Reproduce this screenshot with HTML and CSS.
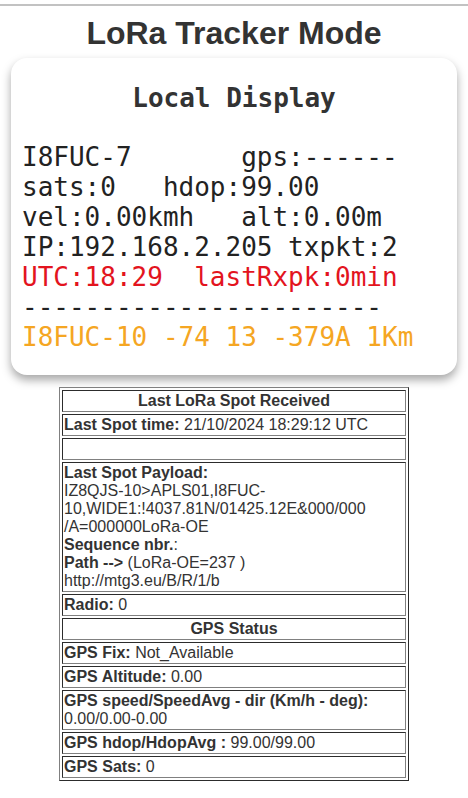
FILE: index.html
```html
<!DOCTYPE html>
<html>
<head>
<meta charset="utf-8">
<title>LoRa Tracker Mode</title>
<link rel="stylesheet" href="styles.css">
</head>
<body>
    <!-- 顶部分隔线 -->
    <div class="topline"></div>
    <h1 class="page-title">LoRa Tracker Mode</h1>

    <!-- 本地显示屏 -->
    <div class="display-card">
        <h2 class="display-title">Local Display</h2>
        <div class="display-lines">
            <div class="line">I8FUC-7       gps:------</div>
            <div class="line">sats:0   hdop:99.00</div>
            <div class="line">vel:0.00kmh   alt:0.00m</div>
            <div class="line">IP:192.168.2.205 txpkt:2</div>
            <div class="line red">UTC:18:29  lastRxpk:0min</div>
            <div class="line">-----------------------</div>
            <div class="line orange">I8FUC-10 -74 13 -379A 1Km</div>
        </div>
    </div>

    <!-- 状态表格 -->
    <table class="status-table">
        <tr><td class="head">Last LoRa Spot Received</td></tr>
        <tr><td><b>Last Spot time:</b> 21/10/2024 18:29:12 UTC</td></tr>
        <tr><td>&nbsp;</td></tr>
        <tr><td><b>Last Spot Payload:</b><br>IZ8QJS-10&gt;APLS01,I8FUC-10,WIDE1:!4037.81N/01425.12E&amp;000/000<wbr>/A=000000LoRa-OE<br><b>Sequence nbr.</b>:<br><b>Path --&gt;</b> (LoRa-OE=237 )<br>http://mtg3.eu/B/R/1/b</td></tr>
        <tr><td><b>Radio:</b> 0</td></tr>
        <tr><td class="head">GPS Status</td></tr>
        <tr><td><b>GPS Fix:</b> Not_Available</td></tr>
        <tr><td><b>GPS Altitude:</b> 0.00</td></tr>
        <tr><td><b>GPS speed/SpeedAvg - dir (Km/h - deg):</b><br>0.00/0.00-0.00</td></tr>
        <tr><td><b>GPS hdop/HdopAvg :</b> 99.00/99.00</td></tr>
        <tr><td><b>GPS Sats:</b> 0</td></tr>
    </table>
</body>
</html>
```
FILE: styles.css
```css
* {
    margin: 0; /* 清除默认边距 */
    padding: 0;
}
body {
    font-family: "Liberation Sans", Arial, sans-serif;
    color: #333;
    background-color: #fff;
}
/* 顶部的灰线 */
.topline {
    margin-top: 4px;
    border-top: 2px solid #c2c2c2;
}
.page-title {
    font-size: 32px;
    font-weight: bold;
    text-align: center;
    line-height: 37px;
    margin: 9px 0 6px;
    color: #333;
}
/* 显示屏卡片 */
.display-card {
    margin: 0 11px;
    padding: 25px 11px 23px;
    background-color: #fff;
    border-radius: 16px;
    box-shadow: 0 5px 10px rgba(0, 0, 0, 0.35);
    font-family: "DejaVu Sans Mono", monospace;
}
.display-title {
    font-size: 26px;
    line-height: 30px;
    text-align: center;
    font-weight: bold;
    color: #333;
    margin-bottom: 29px;
}
.display-lines {
    font-size: 26px;
    line-height: 30px;
    color: #222;
}
.line {
    white-space: pre;
}
.red {
    color: #e3141e;
}
.orange {
    color: #f5a623;
}
/* 表格 */
.status-table {
    width: 350px;
    margin: 12px auto 0;
    border: 1px outset #808080;
    border-spacing: 2px;
    font-size: 16px;
    line-height: 18px;
}
.status-table td {
    border: 1px inset #808080;
    padding: 1px;
    vertical-align: top;
}
.status-table td.head {
    text-align: center;
    font-weight: bold;
}
```
